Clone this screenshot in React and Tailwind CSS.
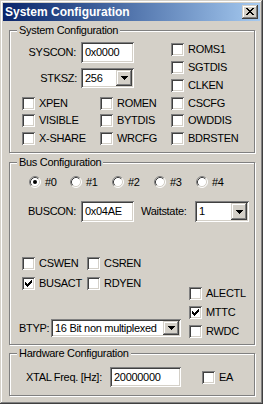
import React from "react";

const sunken =
  "shadow-[inset_1px_1px_0_#808080,inset_-1px_-1px_0_#ffffff,inset_2px_2px_0_#404040,inset_-2px_-2px_0_#d4d0c8]";
const raised =
  "shadow-[inset_-1px_-1px_0_#404040,inset_1px_1px_0_#d4d0c8,inset_-2px_-2px_0_#808080,inset_2px_2px_0_#ffffff]";

function Check({ checked }) {
  return (
    <div className={`relative w-[13px] h-[13px] shrink-0 bg-white ${sunken}`}>
      {checked && (
        <svg
          className="absolute left-[3px] top-[3px]"
          width="7"
          height="7"
          viewBox="0 0 7 7"
          shapeRendering="crispEdges"
        >
          <path
            d="M6 0h1v1h-1z M5 1h2v1h-2z M0 2h1v1h-1z M4 2h3v1h-3z M0 3h2v1h-2z M3 3h3v1h-3z M0 4h5v1h-5z M1 5h3v1h-3z M2 6h1v1h-1z"
            fill="#000"
          />
        </svg>
      )}
    </div>
  );
}

function CB({ label, checked }) {
  return (
    <div className="flex items-center h-[13px]">
      <Check checked={checked} />
      <span className="ml-[4px] leading-[13px] whitespace-nowrap">{label}</span>
    </div>
  );
}

function Radio({ label, checked, w }) {
  return (
    <div className={`flex items-center h-[12px] ${w}`}>
      <svg width="12" height="12" viewBox="0 0 12 12" className="shrink-0">
        <circle cx="6" cy="6" r="5" fill="#fff" />
        <path d="M2.11 9.89 A5.5 5.5 0 0 1 9.89 2.11" fill="none" stroke="#808080" strokeWidth="1" />
        <path d="M9.89 2.11 A5.5 5.5 0 0 1 2.11 9.89" fill="none" stroke="#ffffff" strokeWidth="1" />
        <path d="M2.82 9.18 A4.5 4.5 0 0 1 9.18 2.82" fill="none" stroke="#404040" strokeWidth="1" />
        <path d="M9.18 2.82 A4.5 4.5 0 0 1 2.82 9.18" fill="none" stroke="#d4d0c8" strokeWidth="1" />
        {checked && <circle cx="6" cy="6" r="2" fill="#000" />}
      </svg>
      <span className="ml-[4px] leading-[12px]">{label}</span>
    </div>
  );
}

function Edit({ value, w, h }) {
  return (
    <div className={`flex items-center bg-white pl-[4px] ${sunken} ${w} ${h}`}>
      <span className="leading-[13px]">{value}</span>
    </div>
  );
}

function Select({ value, w, h }) {
  return (
    <div className={`flex items-stretch bg-white p-[2px] ${sunken} ${w} ${h}`}>
      <span className="flex-1 flex items-center pl-[2px] leading-[13px] whitespace-nowrap overflow-hidden">
        {value}
      </span>
      <div className={`w-[16px] shrink-0 bg-[#d4d0c8] flex items-center justify-center ${raised}`}>
        <svg width="7" height="4" viewBox="0 0 7 4" shapeRendering="crispEdges">
          <path d="M0 0h7v1h-7z M1 1h5v1h-5z M2 2h3v1h-3z M3 3h1v1h-1z" fill="#000" />
        </svg>
      </div>
    </div>
  );
}

function Group({ title, className, children }) {
  return (
    <div
      className={`relative border border-[#808080] shadow-[inset_1px_1px_0_#ffffff,1px_1px_0_#ffffff] ${className}`}
    >
      <span className="absolute left-[7px] -top-[7px] px-[2px] bg-[#d4d0c8] leading-[13px] whitespace-nowrap">
        {title}
      </span>
      {children}
    </div>
  );
}

export default function App() {
  return (
    <div className="w-[263px] h-[404px] bg-[#d4d0c8] p-[3px] flex flex-col font-['Liberation_Sans',Arial,sans-serif] text-[11px] text-black tracking-[-0.3px] shadow-[inset_-1px_-1px_0_#404040,inset_1px_1px_0_#d4d0c8,inset_-2px_-2px_0_#808080,inset_2px_2px_0_#ffffff]">
      {/* Title bar */}
      <div className="h-[18px] flex items-center bg-linear-to-r from-[#0a246a] to-[#a6caf0] pl-[2px] pr-[2px]">
        <span className="text-white font-bold text-[12px] tracking-normal leading-[18px]">
          System Configuration
        </span>
        <div className={`ml-auto relative w-[16px] h-[14px] bg-[#d4d0c8] ${raised}`}>
          <svg
            className="absolute left-[4px] top-[3px]"
            width="8"
            height="7"
            viewBox="0 0 8 7"
            shapeRendering="crispEdges"
          >
            <path
              d="M0 0h2v1h-2z M6 0h2v1h-2z M1 1h2v1h-2z M5 1h2v1h-2z M2 2h4v1h-4z M3 3h2v1h-2z M2 4h4v1h-4z M1 5h2v1h-2z M5 5h2v1h-2z M0 6h2v1h-2z M6 6h2v1h-2z"
              fill="#000"
            />
          </svg>
        </div>
      </div>

      <div className="pl-[6px] pr-[5px] flex flex-col">
        {/* System Configuration */}
        <Group title="System Configuration" className="mt-[9px] h-[123px] pt-[11px]">
          <div className="flex pl-[12px]">
            <div className="w-[149px] flex flex-col">
              <div className="flex items-center h-[21px]">
                <span className="w-[55px] text-right pr-[1px]">SYSCON:</span>
                <div className="ml-[4px]">
                  <Edit value="0x0000" w="w-[53px]" h="h-[21px]" />
                </div>
              </div>
              <div className="flex items-center h-[20px] mt-[5px]">
                <span className="w-[55px] text-right">STKSZ:</span>
                <div className="ml-[4px]">
                  <Select value="256" w="w-[53px]" h="h-[20px]" />
                </div>
              </div>
            </div>
            <div className="flex flex-col gap-[5px] mt-[1px]">
              <CB label="ROMS1" />
              <CB label="SGTDIS" />
              <CB label="CLKEN" />
            </div>
          </div>
          <div className="grid grid-cols-[78px_71px_auto] pl-[12px] mt-[5px] gap-y-[4px]">
            <CB label="XPEN" />
            <CB label="ROMEN" />
            <CB label="CSCFG" />
            <CB label="VISIBLE" />
            <CB label="BYTDIS" />
            <CB label="OWDDIS" />
            <div className="col-span-3 grid grid-cols-[78px_71px_auto] mt-[1px]">
              <CB label="X-SHARE" />
              <CB label="WRCFG" />
              <CB label="BDRSTEN" />
            </div>
          </div>
        </Group>

        {/* Bus Configuration */}
        <Group title="Bus Configuration" className="mt-[9px] h-[183px] pt-[13px]">
          <div className="flex pl-[19px]">
            <Radio label="#0" checked w="w-[41px]" />
            <Radio label="#1" w="w-[42px]" />
            <Radio label="#2" w="w-[42px]" />
            <Radio label="#3" w="w-[42px]" />
            <Radio label="#4" w="w-[42px]" />
          </div>
          <div className="flex items-center mt-[13px] pl-[18px] h-[21px]">
            <span className="w-[53px]">BUSCON:</span>
            <Edit value="0x04AE" w="w-[53px]" h="h-[21px]" />
            <span className="w-[61px] pl-[7px]">Waitstate:</span>
            <Select value="1" w="w-[54px]" h="h-[21px]" />
          </div>
          <div className="flex mt-[35px]">
            <div className="w-[179px] flex flex-col">
              <div className="grid grid-cols-[65px_auto] gap-y-[7px] pl-[12px]">
                <CB label="CSWEN" />
                <CB label="CSREN" />
                <CB label="BUSACT" checked />
                <CB label="RDYEN" />
              </div>
              <div className="flex items-center mt-[29px] pl-[9px]">
                <span className="w-[32px]">BTYP:</span>
                <Select value="16 Bit non multiplexed" w="w-[130px]" h="h-[18px]" />
              </div>
            </div>
            <div className="flex flex-col gap-[6px] mt-[30px]">
              <CB label="ALECTL" />
              <CB label="MTTC" checked />
              <CB label="RWDC" />
            </div>
          </div>
        </Group>

        {/* Hardware Configuration */}
        <Group title="Hardware Configuration" className="mt-[8px] h-[43px] pt-[13px]">
          <div className="flex items-center pl-[16px]">
            <span className="w-[84px] whitespace-nowrap">XTAL Freq. [Hz]:</span>
            <Edit value="20000000" w="w-[71px]" h="h-[20px]" />
            <div className="ml-[21px]">
              <CB label="EA" />
            </div>
          </div>
        </Group>
      </div>
    </div>
  );
}
